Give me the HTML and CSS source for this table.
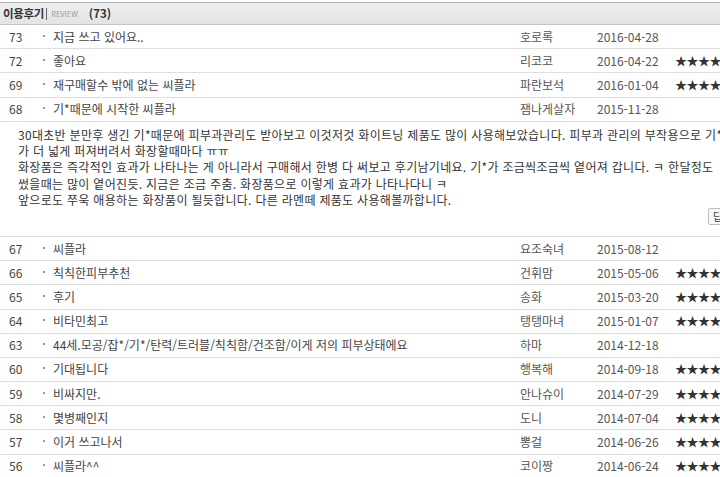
FILE: index.html
```html
<!DOCTYPE html>
<html lang="ko">
<head>
<meta charset="utf-8">
<title>이용후기</title>
<link rel="stylesheet" href="styles.css">
</head>
<body>
<div class="board">
  <div class="head">
    <span class="head-title">이용후기</span><span class="head-sep"></span><span class="head-en">REVIEW</span><span class="head-count">(73)</span>
  </div>
  <div class="row"><span class="num">73</span><span class="title"><i class="dot"></i>지금 쓰고 있어요..</span><span class="name">호로록</span><span class="date">2016-04-28</span><span class="stars"></span></div>
  <div class="row"><span class="num">72</span><span class="title"><i class="dot"></i>좋아요</span><span class="name">리코코</span><span class="date">2016-04-22</span><span class="stars">★★★★☆</span></div>
  <div class="row"><span class="num">69</span><span class="title"><i class="dot"></i>재구매할수 밖에 없는 씨플라</span><span class="name">파란보석</span><span class="date">2016-01-04</span><span class="stars">★★★★☆</span></div>
  <div class="row"><span class="num">68</span><span class="title"><i class="dot"></i>기*때문에 시작한 씨플라</span><span class="name">잼나게살자</span><span class="date">2015-11-28</span><span class="stars"></span></div>
  <div class="detail">
    <p class="detail-text">30대초반 분만후 생긴 기*때문에 피부과관리도 받아보고 이것저것 화이트닝 제품도 많이 사용해보았습니다. 피부과 관리의 부작용으로 기*<br>가 더 넓게 퍼져버려서 화장할때마다 ㅠㅠ<br>화장품은 즉각적인 효과가 나타나는 게 아니라서 구매해서 한병 다 써보고 후기남기네요. 기*가 조금씩조금씩 옅어져 갑니다. ㅋ 한달정도<br>썼을때는 많이 옅어진듯. 지금은 조금 주춤. 화장품으로 이렇게 효과가 나타나다니 ㅋ<br>앞으로도 쭈욱 애용하는 화장품이 될듯합니다. 다른 라멘떼 제품도 사용해볼까합니다.</p>
    <div class="detail-actions"><button class="btn">답변</button></div>
  </div>
  <div class="row"><span class="num">67</span><span class="title"><i class="dot"></i>씨플라</span><span class="name">요조숙녀</span><span class="date">2015-08-12</span><span class="stars"></span></div>
  <div class="row"><span class="num">66</span><span class="title"><i class="dot"></i>칙칙한피부추천</span><span class="name">건휘맘</span><span class="date">2015-05-06</span><span class="stars">★★★★☆</span></div>
  <div class="row"><span class="num">65</span><span class="title"><i class="dot"></i>후기</span><span class="name">송화</span><span class="date">2015-03-20</span><span class="stars">★★★★☆</span></div>
  <div class="row"><span class="num">64</span><span class="title"><i class="dot"></i>비타민최고</span><span class="name">탱탱마녀</span><span class="date">2015-01-07</span><span class="stars">★★★★☆</span></div>
  <div class="row"><span class="num">63</span><span class="title"><i class="dot"></i>44세.모공/잡*/기*/탄력/트러블/칙칙함/건조함/이게 저의 피부상태에요</span><span class="name">하마</span><span class="date">2014-12-18</span><span class="stars"></span></div>
  <div class="row"><span class="num">60</span><span class="title"><i class="dot"></i>기대됩니다</span><span class="name">행복해</span><span class="date">2014-09-18</span><span class="stars">★★★★&nbsp;☆</span></div>
  <div class="row"><span class="num">59</span><span class="title"><i class="dot"></i>비싸지만.</span><span class="name">안나슈이</span><span class="date">2014-07-29</span><span class="stars">★★★★☆</span></div>
  <div class="row"><span class="num">58</span><span class="title"><i class="dot"></i>몇병째인지</span><span class="name">도니</span><span class="date">2014-07-04</span><span class="stars">★★★★☆</span></div>
  <div class="row"><span class="num">57</span><span class="title"><i class="dot"></i>이거 쓰고나서</span><span class="name">뽕걸</span><span class="date">2014-06-26</span><span class="stars">★★★★☆</span></div>
  <div class="row"><span class="num">56</span><span class="title"><i class="dot"></i>씨플라^^</span><span class="name">코이짱</span><span class="date">2014-06-24</span><span class="stars">★★★★☆</span></div>
</div>
</body>
</html>
```

FILE: styles.css
```css
html, body {
  margin: 0;
  padding: 0;
  background: #fff;
  overflow: hidden;
}
body {
  width: 720px;
  height: 477px;
  font-family: "Noto Sans CJK KR", "Noto Sans", sans-serif;
  font-size: 12px;
  color: #444;
}
.board {
  width: 760px;
  padding-top: 2px;
}
.head {
  height: 21px;
  border-top: 1px solid #b4b4b4;
  border-bottom: 1px solid #c6c6c6;
  background: linear-gradient(#eeeeee, #e4e4e4);
  display: flex;
  align-items: center;
  padding-left: 3px;
  line-height: 1;
}
.head-title {
  font-weight: bold;
  color: #333;
  font-size: 11.5px;
  letter-spacing: -0.3px;
}
.head-sep {
  width: 1px;
  height: 12px;
  background: #666;
  margin: 0 4px 0 2px;
}
.head-en {
  font-size: 7.5px;
  color: #9a9a9a;
}
.head-count {
  font-weight: bold;
  color: #333;
  font-size: 11.5px;
  margin-left: 11px;
}
.row {
  display: grid;
  grid-template-columns: 42px 478px 77px 78px 1fr;
  align-items: center;
  height: 23.2px;
  border-bottom: 1px solid #dedede;
  white-space: nowrap;
  line-height: 1;
}
.num {
  padding-left: 9px;
  color: #444;
}
.title {
  display: flex;
  align-items: center;
  color: #444;
}
.dot {
  width: 2px;
  height: 2px;
  background: #999;
  margin: 0 8px 2px 1px;
  box-shadow: 0 0 1px #ccc;
}
.name { color: #555; }
.date { color: #555; }
.stars {
  color: #333;
  font-size: 12px;
  letter-spacing: -0.5px;
}
.detail {
  border-bottom: 1px solid #dedede;
  padding: 5px 0 0 18px;
  box-sizing: border-box;
  height: 115.2px;
}
.detail-text {
  margin: 0;
  line-height: 16.3px;
  color: #333;
  letter-spacing: 0.3px;
  white-space: nowrap;
}
.detail-actions {
  display: flex;
  justify-content: flex-start;
  padding-left: 690px;
  margin-top: 0;
}
.btn {
  font-family: inherit;
  font-size: 11px;
  color: #444;
  background: #f8f8f8;
  border: 1px solid #bbb;
  border-radius: 2px;
  height: 17px;
  padding: 0 4px;
  line-height: 1;
}
```
